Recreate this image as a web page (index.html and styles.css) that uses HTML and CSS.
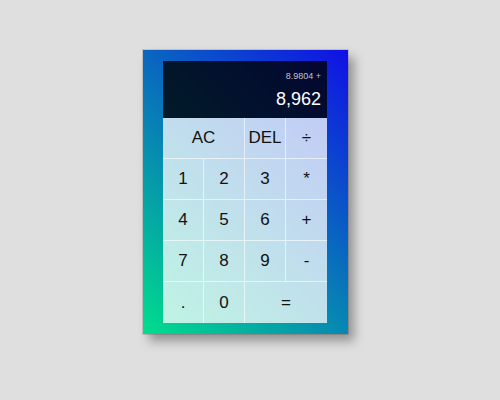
FILE: index.html
```html
<!DOCTYPE html>
<html>
<head>
<meta charset="utf-8">
<link rel="stylesheet" href="styles.css">
</head>
<body>
<div class="stage">
  <div class="calc">
    <div class="output">
      <div class="prev">8.9804 +</div>
      <div class="curr">8,962</div>
    </div>
    <div class="keys">
      <button class="key span2">AC</button>
      <button class="key">DEL</button>
      <button class="key end">÷</button>
      <button class="key">1</button>
      <button class="key">2</button>
      <button class="key">3</button>
      <button class="key end">*</button>
      <button class="key">4</button>
      <button class="key">5</button>
      <button class="key">6</button>
      <button class="key end">+</button>
      <button class="key">7</button>
      <button class="key">8</button>
      <button class="key">9</button>
      <button class="key end">-</button>
      <button class="key last">.</button>
      <button class="key last">0</button>
      <button class="key last end span2">=</button>
    </div>
  </div>
</div>
</body>
</html>
```
FILE: styles.css
```css
html, body {
  margin: 0;
  padding: 0;
  background: #dfdfdf;
  font-family: "Liberation Sans", Arial, sans-serif;
}
.stage {
  width: 500px;
  height: 400px;
  box-sizing: border-box;
  padding: 50px 9px 0 0;
  display: flex;
  justify-content: center;
  align-items: flex-start;
}
.calc {
  width: 205px;
  box-sizing: border-box;
  padding: 11px 21px 11px 20px;
  background: linear-gradient(45deg, #00de8c 0%, #1010e6 100%);
  box-shadow: 0 0 0 1px rgba(0, 0, 0, 0.12), 6px 7px 10px rgba(0, 0, 0, 0.35);
}
.output {
  background: rgba(0, 0, 0, 0.78);
  box-sizing: border-box;
  height: 57px;
  padding: 10px 6px 8px;
  display: flex;
  flex-direction: column;
  align-items: flex-end;
  gap: 6px;
}
.prev {
  font-size: 9px;
  line-height: 11px;
  color: rgba(255, 255, 255, 0.75);
}
.curr {
  font-size: 18px;
  line-height: 22px;
  color: #fff;
}
.keys {
  display: grid;
  grid-template-columns: repeat(4, 41px);
  grid-auto-rows: 41px;
}
.key {
  margin: 0;
  padding: 0;
  border: 0;
  border-right: 1px solid rgba(255, 255, 255, 0.6);
  border-bottom: 1px solid rgba(255, 255, 255, 0.6);
  background: rgba(255, 255, 255, 0.75);
  font-family: "Liberation Sans", Arial, sans-serif;
  font-size: 17px;
  color: #111;
}
.key.end {
  border-right: 0;
}
.key.last {
  border-bottom: 0;
}
.span2 {
  grid-column: span 2;
}
```
